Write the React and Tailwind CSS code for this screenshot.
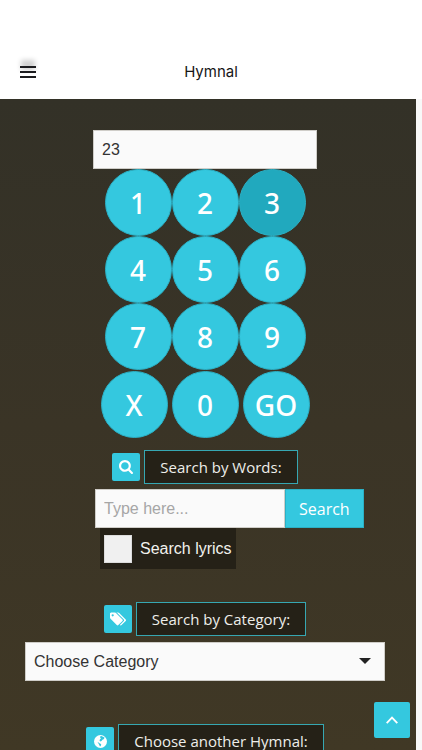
import React, { useState } from 'react'

const CATEGORIES = ['Praise', 'Worship', 'Prayer', 'Thanksgiving', 'Christmas', 'Easter']
const DIGIT_ROWS = [
  ['1', '2', '3'],
  ['4', '5', '6'],
  ['7', '8', '9'],
]

function SearchIcon() {
  return (
    <svg viewBox="0 128 1664 1664" className="w-3.5 h-3.5" fill="currentColor" aria-hidden="true">
      <path d="M1152 832q0-185-131.5-316.5t-316.5-131.5-316.5 131.5-131.5 316.5 131.5 316.5 316.5 131.5 316.5-131.5 131.5-316.5zm512 832q0 52-38 90t-90 38q-54 0-90-38l-343-342q-179 124-399 124-143 0-273.5-55.5t-225-150-150-225-55.5-273.5 55.5-273.5 150-225 225-150 273.5-55.5 273.5 55.5 225 150 150 225 55.5 273.5q0 220-124 399l343 343q37 37 37 90z" />
    </svg>
  )
}

function TagsIcon() {
  return (
    <svg viewBox="0 128 1899 1516" className="w-4 h-3.5" fill="currentColor" aria-hidden="true">
      <path d="M448 448q0-53-37.5-90.5t-90.5-37.5-90.5 37.5-37.5 90.5 37.5 90.5 90.5 37.5 90.5-37.5 37.5-90.5zm1067 576q0 53-37 90l-491 492q-39 37-91 37-53 0-90-37l-715-716q-38-37-64.5-101t-26.5-117v-416q0-52 38-90t90-38h416q53 0 117 26.5t102 64.5l715 714q37 39 37 91zm384 0q0 53-37 90l-491 492q-39 37-91 37-36 0-59-14t-53-45l470-470q37-37 37-90 0-52-37-91l-715-714q-38-38-102-64.5t-117-26.5h224q53 0 117 26.5t102 64.5l715 714q37 39 37 91z" />
    </svg>
  )
}

function GlobeIcon() {
  return (
    <svg viewBox="0 0 26 26" className="w-[13px] h-[13px]" aria-hidden="true">
      <circle cx="13" cy="13" r="13" fill="currentColor" />
      <path
        d="M12 3 L15 2 L18 3.5 L21 5 L20 8 L17 9.5 L15 12 L12.5 13 L11 11 L12 8.5 L14 7 L12.5 5.5 Z M7 14 L9 15 L11 16.5 L13 17.5 L14.5 19 L13.5 22 L12 23 L10.5 20 L9.5 18 Z"
        fill="#34c8df"
      />
    </svg>
  )
}

function KeyButton({ children, active, onClick }) {
  return (
    <button
      type="button"
      onClick={onClick}
      className={`w-[67px] h-[67px] rounded-full border border-[#2bb0c5] font-['Noto_Sans','Open_Sans',sans-serif] text-[28px] leading-8 font-medium text-white ${
        active ? 'bg-[#21a9be]' : 'bg-[#34c8df]'
      }`}
    >
      {children}
    </button>
  )
}

function SectionTitle({ icon, children }) {
  return (
    <div className="flex items-center justify-center gap-1">
      <span className="flex items-center justify-center w-7 h-7 rounded-xs bg-[#34c8df] text-white">{icon}</span>
      <h2 className="h-[34px] px-[15px] border border-[#36a7b2] bg-[#252117] text-[15px] leading-8 text-[#eeeeea] whitespace-nowrap">
        {children}
      </h2>
    </div>
  )
}

export default function App() {
  const [number, setNumber] = useState('23')
  const [words, setWords] = useState('')
  const [lyrics, setLyrics] = useState(false)
  const [category, setCategory] = useState('')

  const press = (digit) => setNumber((n) => n + digit)

  return (
    <div className="flex flex-col h-screen bg-[#f8f8f8] font-['Open_Sans',sans-serif]">
      {/* Top bar */}
      <header className="shrink-0 flex items-center h-[99px] px-5 pt-[45px] bg-white">
        <button type="button" aria-label="Menu" className="flex flex-1 items-center">
          <svg viewBox="0 0 16 12" className="w-4 h-3 overflow-visible" aria-hidden="true">
            <defs>
              <filter id="menuGlow" x="-50%" y="-100%" width="200%" height="300%">
                <feGaussianBlur stdDeviation="2.5" />
              </filter>
            </defs>
            <rect x="1" y="-6" width="14" height="10" fill="#000" opacity="0.18" filter="url(#menuGlow)" />
            <path d="M0 1h16M0 6h16M0 11h16" stroke="#1c1c1f" strokeWidth="2" />
          </svg>
        </button>
        <h1 className="font-['Inter',sans-serif] text-[15px] leading-6 text-[#161616]">Hymnal</h1>
        <span className="flex-1" />
      </header>

      <main className="flex-1 min-h-0 mr-1.5 pl-[25px] pr-[31px] pt-[31px] overflow-y-auto [scrollbar-width:none] bg-linear-to-b from-[#333127] via-[#3a3426] to-[#403825]">
        {/* Number pad */}
        <section className="flex flex-col items-center">
          <input
            type="text"
            aria-label="Hymn number"
            value={number}
            onChange={(e) => setNumber(e.target.value)}
            className="w-[224px] h-[39px] px-2 border border-[#cfcdc8] bg-[#fafafa] font-['Liberation_Sans',sans-serif] text-base text-[#333]"
          />
          {DIGIT_ROWS.map((row) => (
            <div key={row[0]} className="flex">
              {row.map((digit) => (
                <KeyButton key={digit} active={digit === '3'} onClick={() => press(digit)}>
                  {digit}
                </KeyButton>
              ))}
            </div>
          ))}
          <div className="flex gap-1 mt-px">
            <KeyButton onClick={() => setNumber('')}>X</KeyButton>
            <KeyButton onClick={() => press('0')}>0</KeyButton>
            <KeyButton>GO</KeyButton>
          </div>
        </section>

        {/* Search by words */}
        <section className="mt-3">
          <SectionTitle icon={<SearchIcon />}>Search by Words:</SectionTitle>
          <form className="mt-[5px] ml-[70px]" onSubmit={(e) => e.preventDefault()}>
            <div className="flex">
              <input
                type="text"
                aria-label="Words to search"
                placeholder="Type here..."
                value={words}
                onChange={(e) => setWords(e.target.value)}
                className="w-[190px] h-[39px] px-2 border border-[#cfcdc8] bg-[#fafafa] font-['Liberation_Sans',sans-serif] text-base text-[#333] placeholder:text-[#a6a6a6]"
              />
              <button type="submit" className="h-[39px] px-[13px] border border-[#2bb0c5] bg-[#34c8df] text-base text-white">
                Search
              </button>
            </div>
            <label className="flex items-center gap-2 w-fit h-[41px] ml-[5px] px-1 bg-[#252117] font-['Liberation_Sans',sans-serif] text-base text-[#f2f2ee]">
              <input
                type="checkbox"
                checked={lyrics}
                onChange={(e) => setLyrics(e.target.checked)}
                className="appearance-none w-7 h-7 border border-[#dcdcdc] bg-[#f0f0f0] checked:bg-[#34c8df]"
              />
              Search lyrics
            </label>
          </form>
        </section>

        {/* Search by category */}
        <section className="mt-[33px]">
          <SectionTitle icon={<TagsIcon />}>Search by Category:</SectionTitle>
          <div className="relative mt-[6px]">
            <select
              aria-label="Category"
              value={category}
              onChange={(e) => setCategory(e.target.value)}
              className="block appearance-none w-full h-[39px] px-2 border border-[#cfcdc8] bg-[#fafafa] font-['Liberation_Sans',sans-serif] text-base text-[#333]"
            >
              <option value="">Choose Category</option>
              {CATEGORIES.map((c) => (
                <option key={c} value={c}>{c}</option>
              ))}
            </select>
            <svg viewBox="0 0 12 6" className="absolute right-3.5 top-4 w-3 h-1.5 pointer-events-none" aria-hidden="true">
              <path d="M0 0h12L6 6z" fill="#222" />
            </svg>
          </div>
        </section>

        <section className="mt-[43px] pb-8">
          <SectionTitle icon={<GlobeIcon />}>Choose another Hymnal:</SectionTitle>
        </section>
      </main>

      {/* Back to top */}
      <button
        type="button"
        aria-label="Back to top"
        className="fixed right-3 bottom-3 flex items-center justify-center w-9 h-9 rounded-xs bg-[#34c8df] text-white"
      >
        <svg viewBox="0 0 12 8" className="w-3 h-2" fill="none" stroke="currentColor" strokeWidth="1.8" aria-hidden="true">
          <path d="M0.7 7.2 6 1.6l5.3 5.6" />
        </svg>
      </button>
    </div>
  )
}
